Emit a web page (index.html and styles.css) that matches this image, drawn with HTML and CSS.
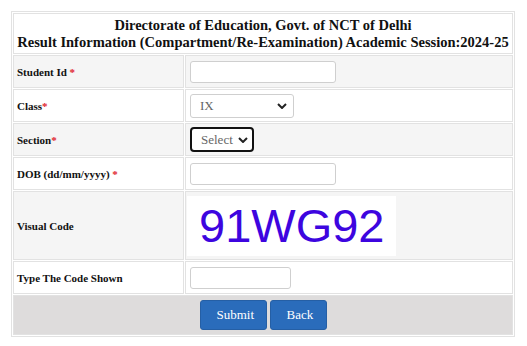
FILE: index.html
```html
<!DOCTYPE html>
<html>
<head>
<meta charset="utf-8">
<link rel="stylesheet" href="styles.css">
</head>
<body>
<table class="form-table">
  <tr>
    <td colspan="2" class="title">Directorate of Education, Govt. of NCT of Delhi<br>Result Information (Compartment/Re-Examination) Academic Session:2024-25</td>
  </tr>
  <tr class="row-alt">
    <td class="label">Student Id <span class="req">*</span></td>
    <td class="field"><input type="text" class="text-input"></td>
  </tr>
  <tr>
    <td class="label">Class<span class="req">*</span></td>
    <td class="field">
      <div class="select class-select"><span>IX</span><svg class="chev" viewBox="0 0 10 6" width="10" height="6"><path d="M1 1 L5 5 L9 1" fill="none" stroke="#222" stroke-width="2"/></svg></div>
    </td>
  </tr>
  <tr class="row-alt">
    <td class="label">Section<span class="req">*</span></td>
    <td class="field">
      <div class="select section-select"><span>Select</span><svg class="chev" viewBox="0 0 10 6" width="10" height="6"><path d="M1 1 L5 5 L9 1" fill="none" stroke="#222" stroke-width="2"/></svg></div>
    </td>
  </tr>
  <tr>
    <td class="label">DOB (dd/mm/yyyy) <span class="req">*</span></td>
    <td class="field"><input type="text" class="text-input"></td>
  </tr>
  <tr class="row-alt captcha-row">
    <td class="label">Visual Code</td>
    <td class="field"><div class="captcha">91WG92</div></td>
  </tr>
  <tr>
    <td class="label">Type The Code Shown</td>
    <td class="field"><input type="text" class="text-input short"></td>
  </tr>
  <tr class="btn-row">
    <td colspan="2"><div class="btns"><button class="btn">Submit</button><button class="btn">Back</button></div></td>
  </tr>
</table>
</body>
</html>
```

FILE: styles.css
```css
html, body {
  margin: 0;
  padding: 0;
  background: #fff;
}
body {
  padding: 11px 0 0 11px;
  font-family: "Liberation Serif", "Times New Roman", serif;
  color: #111;
}
.form-table {
  width: 504px;
  border-collapse: separate;
  border-spacing: 1px;
  border: 1px solid #e2e2e2;
}
.form-table td {
  border: 1px solid #e2e2e2;
  padding: 0;
}
.title {
  height: 39px;
  text-align: center;
  font-weight: bold;
  font-size: 14.5px;
  line-height: 17px;
  background: #fff;
}
.row-alt td {
  background: #f5f5f5;
}
.label {
  width: 166px;
  height: 31px;
  padding-left: 3px !important;
  font-size: 11px;
  font-weight: bold;
}
.req {
  color: #e0202a;
}
.field {
  padding-left: 4px !important;
}
.text-input {
  display: block;
  box-sizing: border-box;
  width: 146px;
  height: 22px;
  border: 1px solid #cfcfcf;
  border-radius: 3px;
  background: #fff;
  margin: 0;
}
.text-input.short {
  width: 101px;
}
.select {
  box-sizing: border-box;
  display: flex;
  align-items: center;
  justify-content: space-between;
  background: #fff;
  font-size: 13px;
  color: #666;
}
.class-select {
  width: 104px;
  height: 24px;
  border: 1px solid #cfcfcf;
  border-radius: 3px;
  padding: 0 6px 0 9px;
}
.section-select {
  width: 64px;
  height: 25px;
  border: 2px solid #111;
  border-radius: 4px;
  padding: 0 4px 0 9px;
}
.captcha-row .label {
  height: 67px;
}
.captcha {
  width: 209px;
  height: 60px;
  background: #fff;
  font-family: "Liberation Sans", Arial, sans-serif;
  font-size: 47px;
  line-height: 60px;
  color: #3d05df;
  padding-left: 12px;
  box-sizing: border-box;
  margin-left: -3px;
}
.btn-row td {
  background: #dedcdc;
  height: 38px;
}
.btns {
  display: flex;
  justify-content: center;
  gap: 3px;
}
.btn {
  height: 30px;
  padding: 0 16px;
  background: #2a6cbb;
  color: #fff;
  border: 1px solid #255fa5;
  border-radius: 3px;
  font-family: "Liberation Serif", "Times New Roman", serif;
  font-size: 13px;
}
.btn:first-child {
  width: 67px;
}
.btn:last-child {
  width: 57px;
}
```
